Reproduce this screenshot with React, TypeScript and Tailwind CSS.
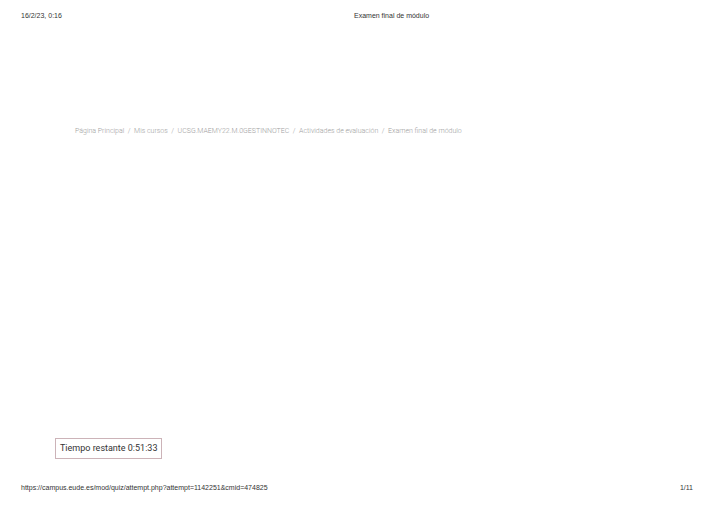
export default function App() {
  return (
    <div className="flex h-[509px] w-[714px] flex-col bg-white">
      {/* print header */}
      <div className="flex h-[32px] items-center pl-[21px] pr-[21px] pt-[1px] font-['Liberation_Sans',Arial,sans-serif] text-[7px] text-[#333]">
        <span className="w-[333px]">16/2/23, 0:16</span>
        <span>Examen final de módulo</span>
      </div>

      <div className="flex flex-1 flex-col px-[55px] font-['Roboto',sans-serif]">
        <nav className="mt-[94px] flex items-center pl-[20px] text-[7px] font-light text-[#9e9e9e]">
          <span>Página Principal</span>
          <span className="px-[3.5px]">/</span>
          <span>Mis cursos</span>
          <span className="px-[3.5px]">/</span>
          <span>UCSG.MAEMY22.M.0GESTINNOTEC</span>
          <span className="px-[3.5px]">/</span>
          <span>Actividades de evaluación</span>
          <span className="px-[3.5px]">/</span>
          <span>Examen final de módulo</span>
        </nav>

        <div className="mt-auto mb-[14px] self-start border border-[#ccb3b8] px-[4px] py-[3px] text-[9px] leading-[13px] text-[#333]">
          Tiempo restante 0:51:33
        </div>
      </div>

      {/* print footer */}
      <div className="flex h-[36px] items-start justify-between px-[21px] pt-[10px] font-['Liberation_Sans',Arial,sans-serif] text-[7px] text-[#333]">
        <span>https://campus.eude.es/mod/quiz/attempt.php?attempt=1142251&amp;cmid=474825</span>
        <span>1/11</span>
      </div>
    </div>
  )
}
